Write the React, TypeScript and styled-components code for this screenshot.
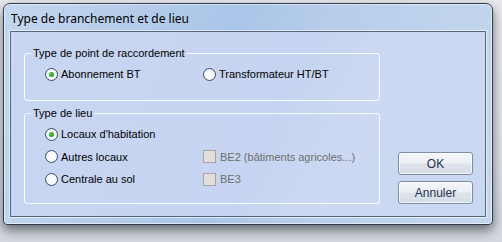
import styled, { createGlobalStyle } from 'styled-components';

const GlobalStyle = createGlobalStyle`
  html, body {
    margin: 0;
    padding: 0;
    width: 502px;
    height: 242px;
    overflow: hidden;
    background: linear-gradient(180deg, #e9eaee 0%, #e2e5ea 60%, #d4d8df 100%);
    font-family: 'Liberation Sans', Arial, sans-serif;
  }
`;

const App = () => {
  return (
    <>
      <GlobalStyle />
      <Window>
        <TitleBar>Type de branchement et de lieu</TitleBar>
        <Client>
          <Groups>
            <Group>
              <Legend>Type de point de raccordement</Legend>
              <GroupGrid>
                <Radio label="Abonnement BT" checked />
                <Radio label="Transformateur HT/BT" />
              </GroupGrid>
            </Group>
            <Group $tall>
              <Legend>Type de lieu</Legend>
              <GroupGrid>
                <Radio label="Locaux d'habitation" checked />
                <span />
                <Radio label="Autres locaux" />
                <Check label="BE2 (bâtiments agricoles...)" />
                <Radio label="Centrale au sol" />
                <Check label="BE3" />
              </GroupGrid>
            </Group>
          </Groups>
          <Buttons>
            <Button>OK</Button>
            <Button>Annuler</Button>
          </Buttons>
        </Client>
      </Window>
    </>
  );
};

interface OptionProps {
  label: string;
  checked?: boolean;
}

const Radio = ({ label, checked }: OptionProps) => (
  <Option>
    <RadioDot $checked={checked} />
    {label}
  </Option>
);

const Check = ({ label }: OptionProps) => (
  <Option $disabled>
    <CheckBox />
    {label}
  </Option>
);

export default App;

const Window = styled.div`
  margin: 3px 0 0 3px;
  width: 490px;
  height: 222px;
  box-sizing: border-box;
  border: 1px solid #2f3b4c;
  border-radius: 7px 7px 4px 4px;
  background: linear-gradient(100deg, #c3d6ee 0%, #a9c5e8 45%, #b7cdea 62%, #c4d7ee 100%);
  box-shadow: 0 5px 12px rgba(20, 25, 35, 0.6), inset 0 0 0 1px rgba(255, 255, 255, 0.55);
  display: flex;
  flex-direction: column;
  padding: 0 6px 7px 6px;
`;

const TitleBar = styled.div`
  height: 27px;
  display: flex;
  align-items: center;
  padding: 1px 0 0 1px;
  font-family: 'Noto Sans', 'Open Sans', sans-serif;
  font-size: 12px;
  color: #000;
  box-sizing: border-box;
`;

const Client = styled.div`
  flex: 1;
  display: flex;
  gap: 18px;
  border: 1px solid #55657d;
  box-shadow: 0 0 0 1px rgba(255, 255, 255, 0.6);
  background: linear-gradient(115deg, #c9d6f2 0%, #c6d4f1 55%, #cdd9f3 70%, #c9d7f1 100%);
  padding: 15px 12px 12px 13px;
`;

const Groups = styled.div`
  display: flex;
  flex-direction: column;
  gap: 6px;
  width: 357px;
`;

const Group = styled.fieldset<{ $tall?: boolean }>`
  margin: 0;
  padding: 0;
  border: 1px solid #fbfcff;
  border-radius: 3px;
  height: ${({ $tall }) => ($tall ? '97px' : '54px')};
  box-sizing: border-box;
`;

const Legend = styled.legend`
  margin-left: 6px;
  padding: 0 2px;
  font-size: 11px;
  line-height: 13px;
  color: #000;
`;

const GroupGrid = styled.div`
  display: grid;
  grid-template-columns: 158px auto;
  grid-auto-rows: 22.5px;
  margin: 3px 0 0 20px;
`;

const Option = styled.div<{ $disabled?: boolean }>`
  display: flex;
  align-items: center;
  gap: 3px;
  font-size: 11px;
  color: ${({ $disabled }) => ($disabled ? '#6d6d6d' : '#000')};
  white-space: nowrap;
`;

const RadioDot = styled.span<{ $checked?: boolean }>`
  width: 11px;
  height: 11px;
  border-radius: 50%;
  border: 1px solid #3d4d66;
  background: radial-gradient(circle, #ffffff 0%, #f4f6f9 60%, #dfe4ec 100%);
  display: flex;
  align-items: center;
  justify-content: center;
  &::after {
    content: '';
    display: ${({ $checked }) => ($checked ? 'block' : 'none')};
    width: 5px;
    height: 5px;
    border-radius: 50%;
    background: radial-gradient(circle at 40% 40%, #4fd04a 0%, #1f9a1b 70%, #167a14 100%);
  }
`;

const CheckBox = styled.span`
  width: 11px;
  height: 11px;
  border: 1px solid #a6a6a6;
  background: #e2dfda;
  margin-right: 1px;
`;

const Buttons = styled.div`
  align-self: flex-end;
  display: flex;
  flex-direction: column;
  gap: 6px;
`;

const Button = styled.button`
  width: 75px;
  height: 23px;
  border: 1px solid #7d8da4;
  border-radius: 3px;
  background: linear-gradient(180deg, #f4f6f9 0%, #eceff4 45%, #dde3eb 55%, #d6dde7 100%);
  box-shadow: inset 0 0 0 1px rgba(255, 255, 255, 0.7);
  font-family: 'Liberation Sans', Arial, sans-serif;
  font-size: 12px;
  color: #23324d;
  padding: 0;
`;
